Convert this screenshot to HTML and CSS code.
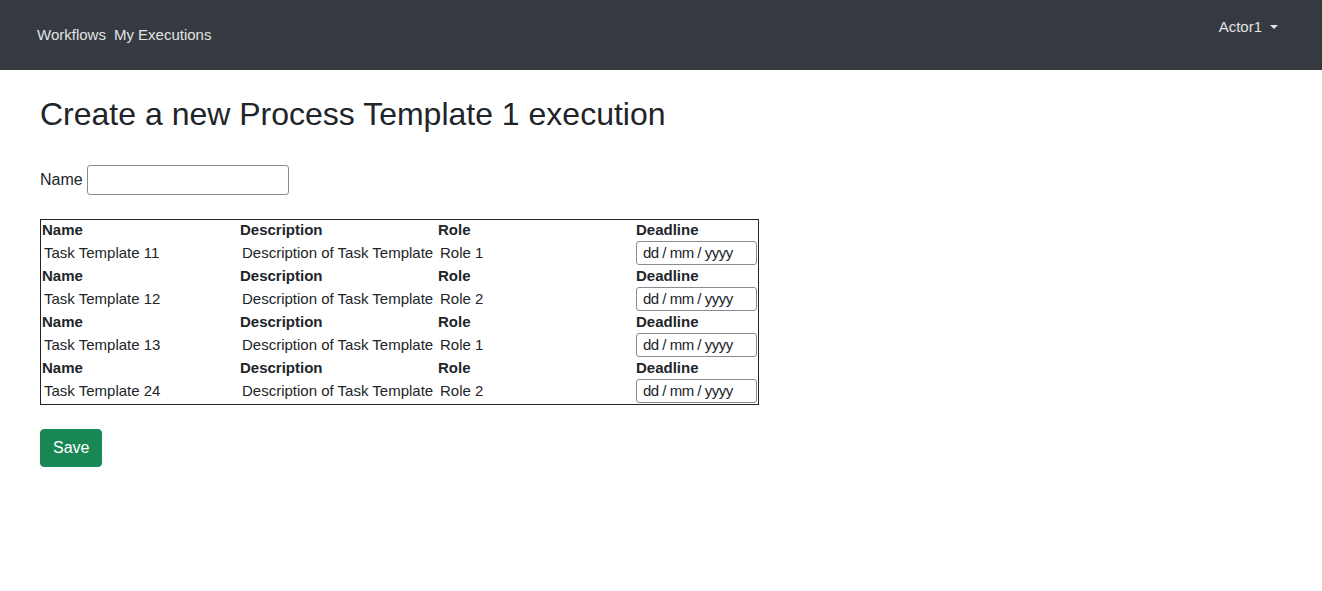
FILE: index.html
```html
<!DOCTYPE html>
<html lang="en">
<head>
<meta charset="UTF-8">
<meta name="viewport" content="width=device-width, initial-scale=1.0">
<title>New execution</title>
<link rel="stylesheet" href="styles.css">
</head>
<body>

<nav class="navbar">
  <div class="nav-links">
    <a class="nav-link" href="#">Workflows</a>
    <a class="nav-link" href="#">My Executions</a>
  </div>
  <div class="nav-user">
    <a class="dropdown-toggle" href="#">Actor1</a>
  </div>
</nav>

<main class="content">
  <h2 class="page-title">Create a new Process Template 1 execution</h2>

  <form>
    <div class="name-row">
      <label for="execName">Name</label>
      <input type="text" id="execName" class="name-input">
    </div>

    <table class="task-table">
      <tbody>
        <tr class="head-row">
          <th>Name</th><th>Description</th><th>Role</th><th>Deadline</th>
        </tr>
        <tr>
          <td><input class="plain" type="text" readonly value="Task Template 11"></td>
          <td><input class="plain" type="text" readonly value="Description of Task Template 11"></td>
          <td><input class="plain" type="text" readonly value="Role 1"></td>
          <td><input class="date-input" type="text" placeholder="dd / mm / yyyy"></td>
        </tr>
        <tr class="head-row">
          <th>Name</th><th>Description</th><th>Role</th><th>Deadline</th>
        </tr>
        <tr>
          <td><input class="plain" type="text" readonly value="Task Template 12"></td>
          <td><input class="plain" type="text" readonly value="Description of Task Template 12"></td>
          <td><input class="plain" type="text" readonly value="Role 2"></td>
          <td><input class="date-input" type="text" placeholder="dd / mm / yyyy"></td>
        </tr>
        <tr class="head-row">
          <th>Name</th><th>Description</th><th>Role</th><th>Deadline</th>
        </tr>
        <tr>
          <td><input class="plain" type="text" readonly value="Task Template 13"></td>
          <td><input class="plain" type="text" readonly value="Description of Task Template 13"></td>
          <td><input class="plain" type="text" readonly value="Role 1"></td>
          <td><input class="date-input" type="text" placeholder="dd / mm / yyyy"></td>
        </tr>
        <tr class="head-row">
          <th>Name</th><th>Description</th><th>Role</th><th>Deadline</th>
        </tr>
        <tr>
          <td><input class="plain" type="text" readonly value="Task Template 24"></td>
          <td><input class="plain" type="text" readonly value="Description of Task Template 24"></td>
          <td><input class="plain" type="text" readonly value="Role 2"></td>
          <td><input class="date-input" type="text" placeholder="dd / mm / yyyy"></td>
        </tr>
      </tbody>
    </table>

    <button type="submit" class="btn-save">Save</button>
  </form>
</main>

</body>
</html>
```

FILE: styles.css
```css
* {
    box-sizing: border-box;
}
body {
    margin: 0;
    font-family: "Liberation Sans", Arial, sans-serif;
    font-size: 16px;
    line-height: 1.5;
    color: #212529;
    background-color: #fff;
}

/* top bar */
.navbar {
    height: 70px;
    background-color: #343a40;
    display: flex;
    justify-content: space-between;
    padding: 0 44px 0 37px;
}
.nav-links {
    display: flex;
    align-items: center;
    gap: 8px;
}
.nav-link {
    color: #e2e3e4;
    text-decoration: none;
    font-size: 15px;
}
.nav-user {
    padding-top: 15px;
}
.dropdown-toggle {
    color: #e2e3e4;
    text-decoration: none;
    font-size: 15px;
    line-height: 22px;
}
.dropdown-toggle::after {
    content: "";
    display: inline-block;
    margin-left: 8px;
    vertical-align: 3px;
    border-top: 4.5px solid;
    border-right: 4.5px solid transparent;
    border-left: 4.5px solid transparent;
}

/* page */
.content {
    padding: 0 40px;
}
.page-title {
    font-size: 32px;
    font-weight: 400;
    line-height: 1.2;
    margin: 25px 0 32px;
}
.name-row {
    display: flex;
    align-items: center;
    gap: 4px;
}
.name-input {
    width: 202px;
    height: 30px;
    border: 1px solid #8a8a95;
    border-radius: 3px;
    padding: 1px 4px;
    font: inherit;
}

/* tasks */
.task-table {
    margin-top: 24px;
    border: 1px solid #212529;
    border-collapse: collapse;
    font-size: 15px;
}
.task-table th {
    text-align: left;
    font-weight: 700;
    line-height: 18px;
    padding: 1px;
}
.task-table td {
    padding: 1px;
    line-height: 18px;
}
.plain {
    width: 196px;
    border: 0;
    padding: 1px 2px;
    font: inherit;
    color: #212529;
    background: transparent;
    outline: none;
}
.date-input {
    display: block;
    width: 121px;
    height: 24px;
    border: 1px solid #8a8a95;
    border-radius: 3px;
    padding: 0 6px 2px;
    font: inherit;
    letter-spacing: -0.5px;
    color: #212529;
}
.date-input::placeholder {
    color: #212529;
    opacity: 1;
}

.btn-save {
    margin-top: 24px;
    background-color: #198754;
    color: #fff;
    border: 1px solid #198754;
    border-radius: 4px;
    padding: 6px 12px;
    font: inherit;
    cursor: pointer;
}
```
